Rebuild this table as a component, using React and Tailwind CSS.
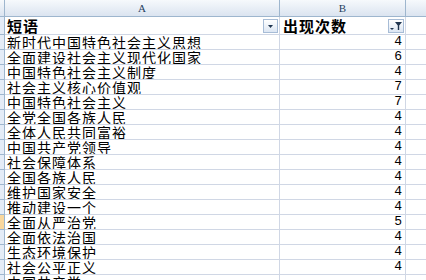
import React from "react";

const rows = [
  ["新时代中国特色社会主义思想", 4],
  ["全面建设社会主义现代化国家", 6],
  ["中国特色社会主义制度", 4],
  ["社会主义核心价值观", 7],
  ["中国特色社会主义", 7],
  ["全党全国各族人民", 4],
  ["全体人民共同富裕", 4],
  ["中国共产党领导", 4],
  ["社会保障体系", 4],
  ["全国各族人民", 4],
  ["维护国家安全", 4],
  ["推动建设一个", 4],
  ["全面从严治党", 5],
  ["全面依法治国", 4],
  ["生态环境保护", 4],
  ["社会公平正义", 4],
  ["中国共产党", ""],
];

const cjk = { fontFamily: '"Noto Sans CJK SC", sans-serif' };
const mono = { fontFamily: '"Liberation Mono", monospace' };

function DropBtn() {
  return (
    <div className="w-[15px] h-[14px] border border-[#a7bcd6] bg-gradient-to-b from-[#ffffff] to-[#dce6f3] flex items-center justify-center">
      <svg width="9" height="6" viewBox="0 0 9 6">
        <path d="M2 2h5l-2.5 3z" fill="#1f3550" />
      </svg>
    </div>
  );
}

function FilterBtn() {
  return (
    <div className="w-[16px] h-[14px] border border-[#a7bcd6] bg-gradient-to-b from-[#ffffff] to-[#dce6f3] flex items-center justify-center">
      <svg width="14" height="12" viewBox="0 0 14 12">
        <path d="M1 8h4l-2 2z" fill="#1f3550" />
        <path d="M6 2h7l-2.8 3.5v4.5h-1.4v-4.5z" fill="#1f3550" />
      </svg>
    </div>
  );
}

export default function App() {
  return (
    <div className="w-[426px] h-[280px] overflow-hidden bg-white text-black">
      {/* column header row */}
      <div className="flex h-[17px] border-b border-[#9eb6ce] bg-gradient-to-b from-[#f6f9fc] to-[#dbe4f0]">
        <div className="w-[5px] border-r border-[#9eb6ce]" />
        <div className="w-[275px] border-r border-[#9eb6ce] flex items-center justify-center text-[11px] leading-[16px] text-[#27415f]" style={{ fontFamily: '"Liberation Serif", serif' }}>A</div>
        <div className="w-[126px] border-r border-[#9eb6ce] flex items-center justify-center text-[11px] leading-[16px] text-[#27415f]" style={{ fontFamily: '"Liberation Serif", serif' }}>B</div>
        <div className="flex-1" />
      </div>
      {/* header row */}
      <div className="flex h-[18px]">
        <div className="w-[5px] border-r border-b border-[#9eb6ce] bg-[#e4ecf7]" />
        <div className="w-[275px] border-r border-b border-[#d0d7e5] flex items-center justify-between pl-[2px] pr-[1px]">
          <span className="font-bold text-[15px] leading-[17px] tracking-[1px]" style={cjk}>短语</span>
          <DropBtn />
        </div>
        <div className="w-[126px] border-r border-b border-[#d0d7e5] flex items-center justify-between pl-[3px] pr-[1px]">
          <span className="font-bold text-[15px] leading-[17px] tracking-[1px]" style={cjk}>出现次数</span>
          <FilterBtn />
        </div>
        <div className="flex-1 border-b border-[#d0d7e5]" />
      </div>
      {rows.map(([t, n], i) => (
        <div key={i} className="flex h-[15px]">
          <div className={`w-[5px] border-r border-b border-[#9eb6ce] ${i === 12 ? "bg-[#f9d79e]" : "bg-[#e4ecf7]"}`} />
          <div className="w-[275px] border-r border-b border-[#d0d7e5] flex items-center pl-[2px] overflow-hidden">
            <span className="text-[14px] leading-[14px] tracking-[1px] whitespace-nowrap" style={cjk}>{t}</span>
          </div>
          <div className="w-[126px] border-r border-b border-[#d0d7e5] flex items-center justify-end pr-[3px]">
            <span className="text-[13px] leading-[14px]" style={mono}>{n}</span>
          </div>
          <div className="flex-1 border-b border-[#d0d7e5]" />
        </div>
      ))}
    </div>
  );
}
